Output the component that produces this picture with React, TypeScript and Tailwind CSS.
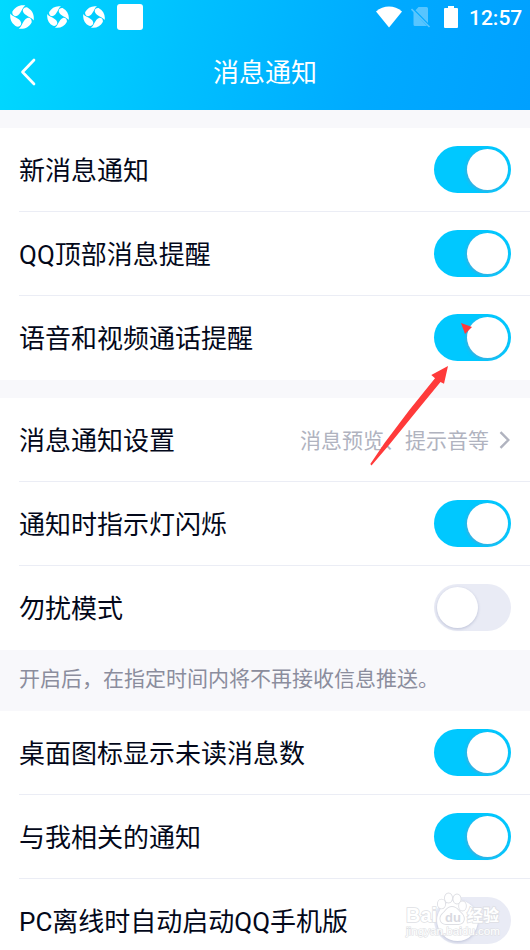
interface RowProps {
  label: string
  on?: boolean
  detail?: string
  last?: boolean
}

function Switch({ on }: { on: boolean }) {
  return (
    <span
      role="switch"
      aria-checked={on}
      className={`flex h-[47px] w-[77px] shrink-0 items-center rounded-full p-[3px] ${on ? 'justify-end bg-[#00c8ff]' : 'justify-start bg-[#e9ebf5]'}`}
    >
      <span
        className={`size-[41px] rounded-full bg-white ${on ? 'shadow-[-1px_1px_3px_rgba(120,150,190,0.6)]' : 'shadow-[0_1px_3px_rgba(120,130,170,0.4)]'}`}
      />
    </span>
  )
}

function Row({ label, on = false, detail, last = false }: RowProps) {
  return (
    <div className="h-[84px] bg-white pl-[19px]">
      <div className={`flex h-full items-center justify-between border-b pr-[19px] ${last ? 'border-transparent' : 'border-[#ebedf5]'}`}>
        <span className="whitespace-nowrap pt-[3px] text-[26px] leading-[38px] text-[#03081a]">{label}</span>
        {detail ? (
          <span className="flex items-center gap-[10px] text-[21px] leading-[30px] text-[#b0b3bf]">
            <span className="pt-[2px]">{detail}</span>
            <svg width="12" height="18" viewBox="0 0 12 18" fill="none" stroke="#b0b3bf" strokeWidth="2.4">
              <path d="M1.5 1.2 9.3 9 1.5 16.8" />
            </svg>
          </span>
        ) : (
          <Switch on={on} />
        )}
      </div>
    </div>
  )
}

function Swirl({ size }: { size: number }) {
  return (
    <svg width={size} height={size} viewBox="0 0 24 24" fill="#fff">
      {[0, 90, 180, 270].map((a) => (
        <path
          key={a}
          transform={`rotate(${a} 12 12)`}
          d="M13 6.6C12.2 4 14.4 1.800 17.4 2.4C22 5 24.6 9.500 23.6 15.4C22.6 13.400 20.5 12.8 18.2 11.400C15.8 10 13.6 8.8 13 6.6Z"
        />
      ))}
    </svg>
  )
}

function StatusBar() {
  return (
    <div className="flex h-[34px] items-center pl-[10px] pr-[7px]">
      <div className="flex items-center">
        <Swirl size={24} />
        <span className="ml-[13px]"><Swirl size={22} /></span>
        <span className="ml-[14px]"><Swirl size={22} /></span>
        <span className="ml-3 size-[26px] rounded-[3px] bg-white" />
      </div>
      <div className="ml-auto flex items-center">
        <svg width="26" height="22" viewBox="0 0 26 22" fill="#fff">
          <path d="M0 5.4C7.5-1 18.5-1 26 5.4L13 21.5Z" />
        </svg>
        <svg className="ml-[9px]" width="20" height="22" viewBox="0 0 20 22">
          <path d="M7.5 1H15.5Q17 1 17 2.5V17L4.5 4.2ZM2.5 6 16 20H4Q2.5 20 2.5 18.5Z" fill="#fff" fillOpacity=".34" />
          <path d="M.5 3 18.5 21" stroke="#fff" strokeOpacity=".35" strokeWidth="1.6" />
        </svg>
        <svg className="ml-[13px]" width="14" height="22" viewBox="0 0 14 22" fill="#fff">
          <path d="M4 0H10V2H13Q14 2 14 3V21Q14 22 13 22H1Q0 22 0 21V3Q0 2 1 2H4Z" />
        </svg>
        <span className="ml-[11px] w-[54px] whitespace-nowrap pt-[2px] font-['Roboto',sans-serif] text-[21px] font-medium leading-6 text-white">12:57</span>
      </div>
    </div>
  )
}

function Watermark() {
  return (
    <svg className="absolute left-[402px] top-[889px]" width="102" height="52" viewBox="0 0 102 52" fill="#fff" stroke="#dedfe4" strokeWidth="1.6" paintOrder="stroke">
      <g fontFamily="'Liberation Sans', 'Noto Sans CJK SC', sans-serif">
        <text x="4" y="33" fontSize="21" textLength="31" lengthAdjust="spacingAndGlyphs" fontWeight="bold">Bai</text>
        <text x="65" y="32" fontSize="16" fontWeight="bold">经验</text>
        <text x="4" y="46" fontSize="11.5" strokeWidth="1.2" textLength="94" lengthAdjust="spacingAndGlyphs">jingyan.baidu.com</text>
      </g>
      <g strokeWidth="1.8">
        <ellipse cx="39.5" cy="15" rx="3.6" ry="4.4" />
        <ellipse cx="46.5" cy="9" rx="3.6" ry="4.6" />
        <ellipse cx="55" cy="10" rx="3.6" ry="4.6" />
        <ellipse cx="60.5" cy="17" rx="3.4" ry="4.6" />
        <path d="M50 18C45 18 44 22 40.5 25C36.5 29 38.5 35 44 35C47 35 53 35 56.5 35C62 35 63.5 29 60 25C56.5 22 55 18 50 18Z" />
      </g>
      <text x="43" y="33" fontSize="13" fontWeight="bold" fill="#d9dae1" stroke="none" fontFamily="'Liberation Sans', sans-serif">du</text>
    </svg>
  )
}

export default function App() {
  return (
    <div className="relative h-[950px] w-[530px] overflow-hidden bg-[#f8f8fb] font-['Roboto','Noto_Sans_CJK_SC',sans-serif]">
      <header className="h-[110px] bg-[linear-gradient(105deg,#00daff_0%,#00c0ff_35%,#00aaff_70%,#00a0ff_100%)]">
        <StatusBar />
        <div className="grid h-[76px] grid-cols-[60px_1fr_60px] items-center">
          <svg className="ml-5" width="16" height="28" viewBox="0 0 16 28" fill="none" stroke="#fff" strokeWidth="2.7" strokeLinecap="round" strokeLinejoin="round">
            <path d="M14 2 2.5 14 14 26" />
          </svg>
          <h1 className="pt-[2px] text-center text-[26px] font-normal leading-[38px] text-white">消息通知</h1>
        </div>
      </header>

      <main className="pt-[18px]">
        <section>
          <Row label="新消息通知" on />
          <Row label="QQ顶部消息提醒" on />
          <Row label="语音和视频通话提醒" on last />
        </section>

        <section className="mt-[18px]">
          <Row label="消息通知设置" detail="消息预览、提示音等" />
          <Row label="通知时指示灯闪烁" on />
          <Row label="勿扰模式" last />
        </section>

        <p className="h-[61px] pl-[19px] pt-3.5 text-[21px] leading-[30px] text-[#8b8d9d]">开启后，在指定时间内将不再接收信息推送。</p>

        <section>
          <Row label="桌面图标显示未读消息数" on />
          <Row label="与我相关的通知" on />
          <Row label="PC离线时自动启动QQ手机版" last />
        </section>
      </main>

      {/* Pointer to the call reminder switch */}
      <svg className="absolute left-[360px] top-[310px]" width="120" height="160" viewBox="0 0 120 160" fill="#ff3a3a">
        <path d="M101 13 112 17 105 24Z" />
        <path d="M88 56 71.3 65 75 68.2 49.4 100 24.5 133 10.3 154 11.5 155.5 29 135 57.5 100 80.5 72 84 73.8Z" />
      </svg>
      <Watermark />
    </div>
  )
}
